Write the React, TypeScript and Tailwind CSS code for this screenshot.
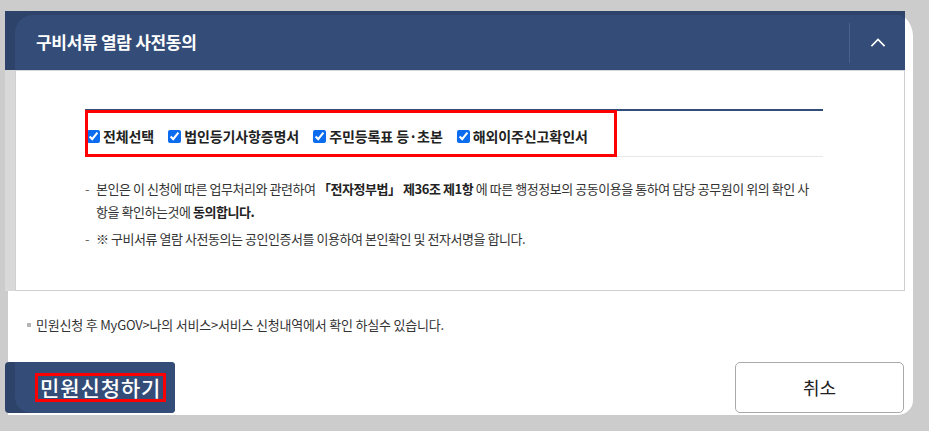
import React from "react"

const docs = ["전체선택", "법인등기사항증명서", "주민등록표 등·초본", "해외이주신고확인서"]

function ChevronUp() {
  return (
    <svg width="16" height="10" viewBox="0 0 16 10" fill="none">
      <path d="M2 8.5 L8 2.5 L14 8.5" stroke="#ffffff" strokeWidth="1.7" strokeLinecap="square" />
    </svg>
  )
}

const App: React.FC = () => {
  return (
    <div className="w-[929px] h-[431px] overflow-hidden bg-[#cccccc] pt-[11px] pl-[8px] font-['Noto_Sans_CJK_KR','Noto_Sans',sans-serif] text-[#333333]">
      {/* white card */}
      <div className="w-[905px] h-[404px] bg-white rounded-tr-[25px] rounded-br-[15px] flex flex-col">
        {/* consent panel */}
        <div className="-ml-[3px] w-[900px]">
          <div className="h-[59px] bg-[#2d4369] pt-[4px] pl-[10px]">
            <div className="h-[55px] bg-[#344d78] rounded-tl-[18px] rounded-tr-[6px] flex items-center">
              <h2 className="flex-1 pl-[21px] pb-[3px] text-[17px] font-bold text-white tracking-[-0.3px] leading-none">
                구비서류 열람 사전동의
              </h2>
              <div className="w-px h-[40px] bg-[#4b6189]" />
              <button className="w-[55px] h-full flex items-center justify-center pb-[2px]">
                <ChevronUp />
              </button>
            </div>
          </div>
          <div className="h-[221px] flex border-t border-[#d6d6d6]">
            <div className="w-[10px] bg-[#d9d9d9]" />
            <div className="flex-1 bg-white border-l border-r border-b border-[#cfcfcf] pl-[69px] pt-[38px]">
              <div className="relative w-[738px] h-[48px] border-t-2 border-[#344d78] border-b border-b-[#e8e8e8] flex items-center pl-[2px] pt-[5px] gap-[14px]">
                {docs.map((d) => (
                  <label key={d} className="flex items-center gap-[3px]">
                    <input type="checkbox" defaultChecked readOnly className="w-[13px] h-[13px] accent-[#0b6cf0]" />
                    <span className="text-[14px] font-bold text-[#222222] tracking-[-0.1px] leading-none">{d}</span>
                  </label>
                ))}
                <div className="absolute left-0 -top-[1px] w-[532px] h-[47px] border-[3px] border-[#ff0000]" />
              </div>
              <ul className="mt-[20px] text-[13px] tracking-[-0.45px] text-[#333333] leading-[23px] flex flex-col gap-[4px]">
                <li className="flex">
                  <span className="w-[11px] text-[#666666]">-</span>
                  <span className="whitespace-nowrap">
                    본인은 이 신청에 따른 업무처리와 관련하여 <b className="font-bold text-[#222222]">「전자정부법」 제36조 제1항</b> 에 따른 행정정보의 공동이용을 통하여 담당 공무원이 위의 확인 사
                    <br />
                    항을 확인하는것에 <b className="font-bold text-[#222222]">동의합니다.</b>
                  </span>
                </li>
                <li className="flex">
                  <span className="w-[11px] text-[#666666]">-</span>
                  <span className="whitespace-nowrap">※ 구비서류 열람 사전동의는 공인인증서를 이용하여 본인확인 및 전자서명을 합니다.</span>
                </li>
              </ul>
            </div>
          </div>
        </div>

        {/* note */}
        <div className="mt-[24px] pl-[19px] flex items-center gap-[5px] text-[13px] tracking-[-0.2px] leading-[20px] text-[#333333]">
          <span className="w-[4px] h-[4px] bg-[#b5b5b5]" />
          <span>민원신청 후 MyGOV&gt;나의 서비스&gt;서비스 신청내역에서 확인 하실수 있습니다.</span>
        </div>

        {/* buttons */}
        <div className="mt-[27px] flex justify-between pr-[9px]">
          <button className="-ml-[3px] w-[170px] h-[51px] bg-[#2d4369] rounded-[4px] flex">
            <span className="ml-[10px] flex-1 bg-[#344d78] rounded-bl-[16px] rounded-r-[4px] flex items-center pl-[20px]">
              <span className="border-[3px] border-[#ff0000] px-[2px] text-[21px] tracking-[0.9px] leading-[23px] text-white font-medium">
                민원신청하기
              </span>
            </span>
          </button>
          <button className="w-[169px] h-[51px] bg-white border border-[#aaaaaa] rounded-[5px] text-[18px] text-[#222222]">
            취소
          </button>
        </div>
      </div>
    </div>
  )
}

export default App
